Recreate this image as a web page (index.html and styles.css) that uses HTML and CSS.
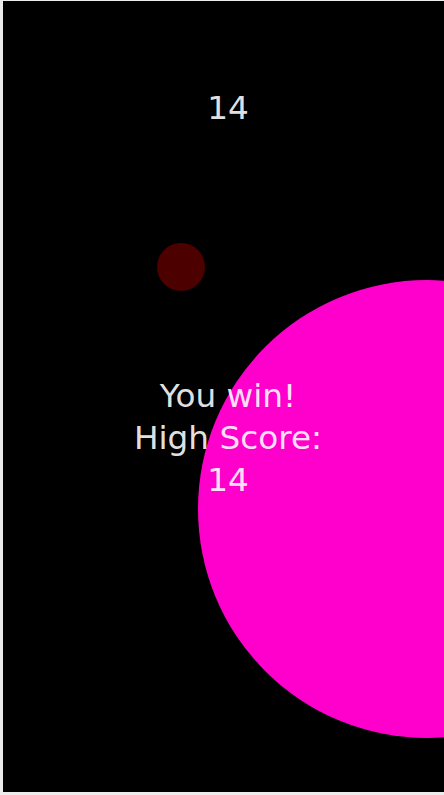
FILE: index.html
```html
<!DOCTYPE html>
<html>
<head>
<meta charset="utf-8">
<link rel="stylesheet" href="styles.css">
</head>
<body>
<div class="stage">
  <div class="ball enemy"></div>
  <div class="ball player"></div>
  <div class="hud">
    <div class="score">14</div>
    <div class="message">You win!<br>High Score:<br>14</div>
  </div>
</div>
</body>
</html>
```
FILE: styles.css
```css
html, body {
  margin: 0;
  padding: 0;
  background: #ececec;
  overflow: hidden;
  height: 795px;
}
.stage {
  position: relative;
  margin: 1px 0 0 3px;
  width: 450px;
  height: 791px;
  background: #000;
  overflow: hidden;
  font-family: "DejaVu Sans", sans-serif;
  font-size: 32.7px;
  line-height: 42px;
  text-align: center;
  color: rgba(255, 255, 255, 0.9);
}
.ball {
  position: absolute;
  border-radius: 50%;
}
.enemy {
  left: 154px;
  top: 242px;
  width: 48px;
  height: 48px;
  background: #4d0000;
}
.player {
  left: 195px;
  top: 279px;
  width: 458px;
  height: 458px;
  background: #ff00cc;
}
.hud {
  position: relative;
}
.score {
  padding-top: 86px;
}
.message {
  margin-top: 246px;
}
```
